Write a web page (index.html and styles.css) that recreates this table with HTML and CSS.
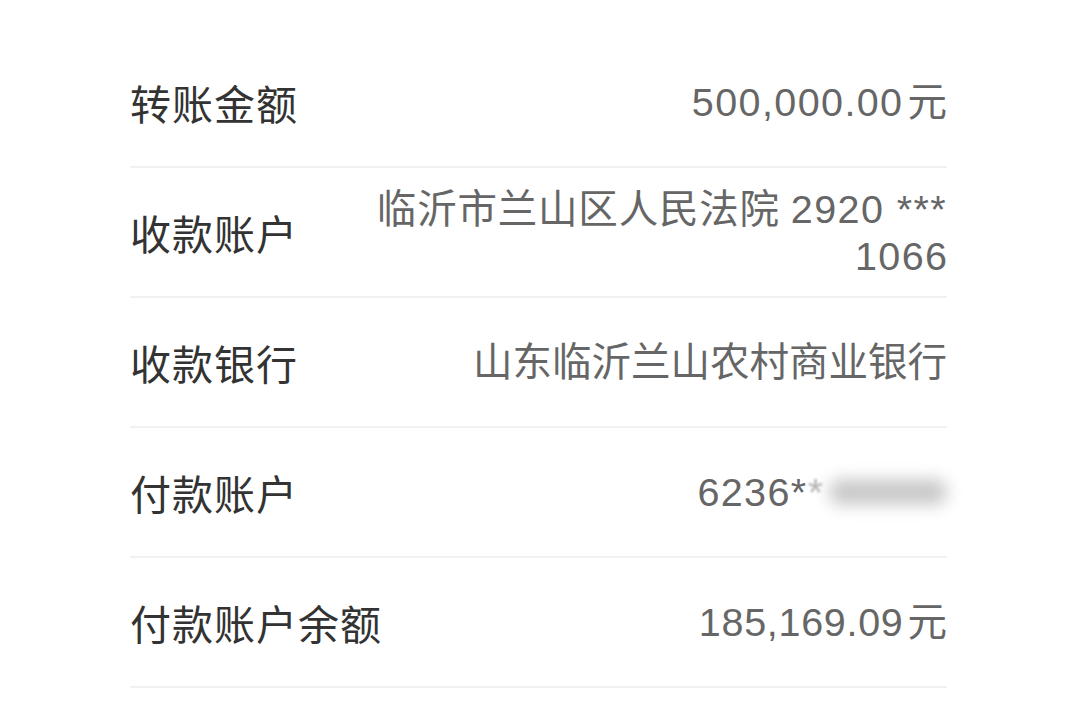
FILE: index.html
```html
<!DOCTYPE html>
<html lang="zh">
<head>
<meta charset="utf-8">
<link rel="stylesheet" href="styles.css">
</head>
<body>
<div class="list">
  <div class="row">
    <div class="label">转账金额</div>
    <div class="value"><span class="num">500,000.00</span><span class="unit">元</span></div>
  </div>
  <div class="row">
    <div class="label">收款账户</div>
    <div class="value multi"><span class="cn">临沂市兰山区人民法院</span> <span class="num">2920 ***</span><br><span class="num">1066</span></div>
  </div>
  <div class="row">
    <div class="label">收款银行</div>
    <div class="value">山东临沂兰山农村商业银行</div>
  </div>
  <div class="row">
    <div class="label">付款账户</div>
    <div class="value"><span class="num">6236*</span><span class="blur"><span class="fade">*</span><span class="blob"></span></span></div>
  </div>
  <div class="row">
    <div class="label">付款账户余额</div>
    <div class="value"><span class="num tight">185,169.09</span><span class="unit">元</span></div>
  </div>
</div>
</body>
</html>
```
FILE: styles.css
```css
html, body {
  margin: 0;
  padding: 0;
  background: #ffffff;
}
body {
  font-family: "Liberation Sans", "Noto Sans CJK SC", sans-serif;
  overflow: hidden;
}
.list {
  margin: 38px 131px 0 130px;
  display: flex;
  flex-direction: column;
}
.row {
  height: 128px;
  border-bottom: 2px solid #f1f1f1;
  display: flex;
  align-items: center;
  justify-content: space-between;
}
.label {
  font-family: "Noto Sans CJK SC", sans-serif;
  font-size: 41px;
  color: #333333;
  letter-spacing: 1px;
  white-space: nowrap;
}
.value {
  font-size: 39.5px;
  color: #666666;
  text-align: right;
  line-height: 47px;
  white-space: nowrap;
  display: flex;
  align-items: center;
}
.value.multi {
  display: block;
  margin-top: 2px;
}
.cn {
  letter-spacing: 0.8px;
}
.num {
  letter-spacing: 1.4px;
}
.num.tight {
  letter-spacing: 0.7px;
}
.multi .num:last-child {
  margin-right: -1.4px;
}
.unit {
  margin-left: 4px;
}
.blur {
  display: inline-flex;
  align-items: center;
}
.fade {
  color: #b5b5b5;
  filter: blur(1px);
}
.blob {
  display: inline-block;
  width: 118px;
  height: 26px;
  margin-left: 6px;
  background: #c9c9c9;
  border-radius: 12px;
  filter: blur(8px);
}
```
